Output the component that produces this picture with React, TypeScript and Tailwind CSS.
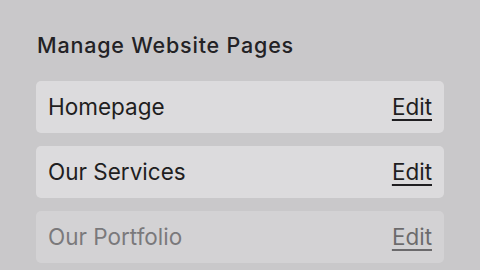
import React from "react";

const pages = [
  { name: "Homepage", faded: false },
  { name: "Our Services", faded: false },
  { name: "Our Portfolio", faded: true },
];

export default function App() {
  return (
    <div
      className="w-[480px] h-[270px] overflow-hidden bg-[#c9c8ca] pl-[36px] pr-[36px] pt-[31px]"
      style={{ fontFamily: "Inter, 'Noto Sans', sans-serif" }}
    >
      <h1 className="text-[21.5px] leading-[28px] font-medium text-[#232225] pl-[1px] tracking-[0.8px]">
        Manage Website Pages
      </h1>
      <div className="mt-[22px] flex flex-col gap-[13px]">
        {pages.map((p) => (
          <div
            key={p.name}
            className={
              "h-[52px] rounded-[5px] bg-[#dcdbdd] flex items-center justify-between px-[12px] text-[22.5px] " +
              (p.faded ? "opacity-55" : "")
            }
          >
            <span className={p.faded ? "text-[#3a393c]" : "text-[#1f1e21]"}>{p.name}</span>
            <span className="underline underline-offset-[4px] decoration-[2px] text-[#1f1e21]">Edit</span>
          </div>
        ))}
      </div>
    </div>
  );
}
